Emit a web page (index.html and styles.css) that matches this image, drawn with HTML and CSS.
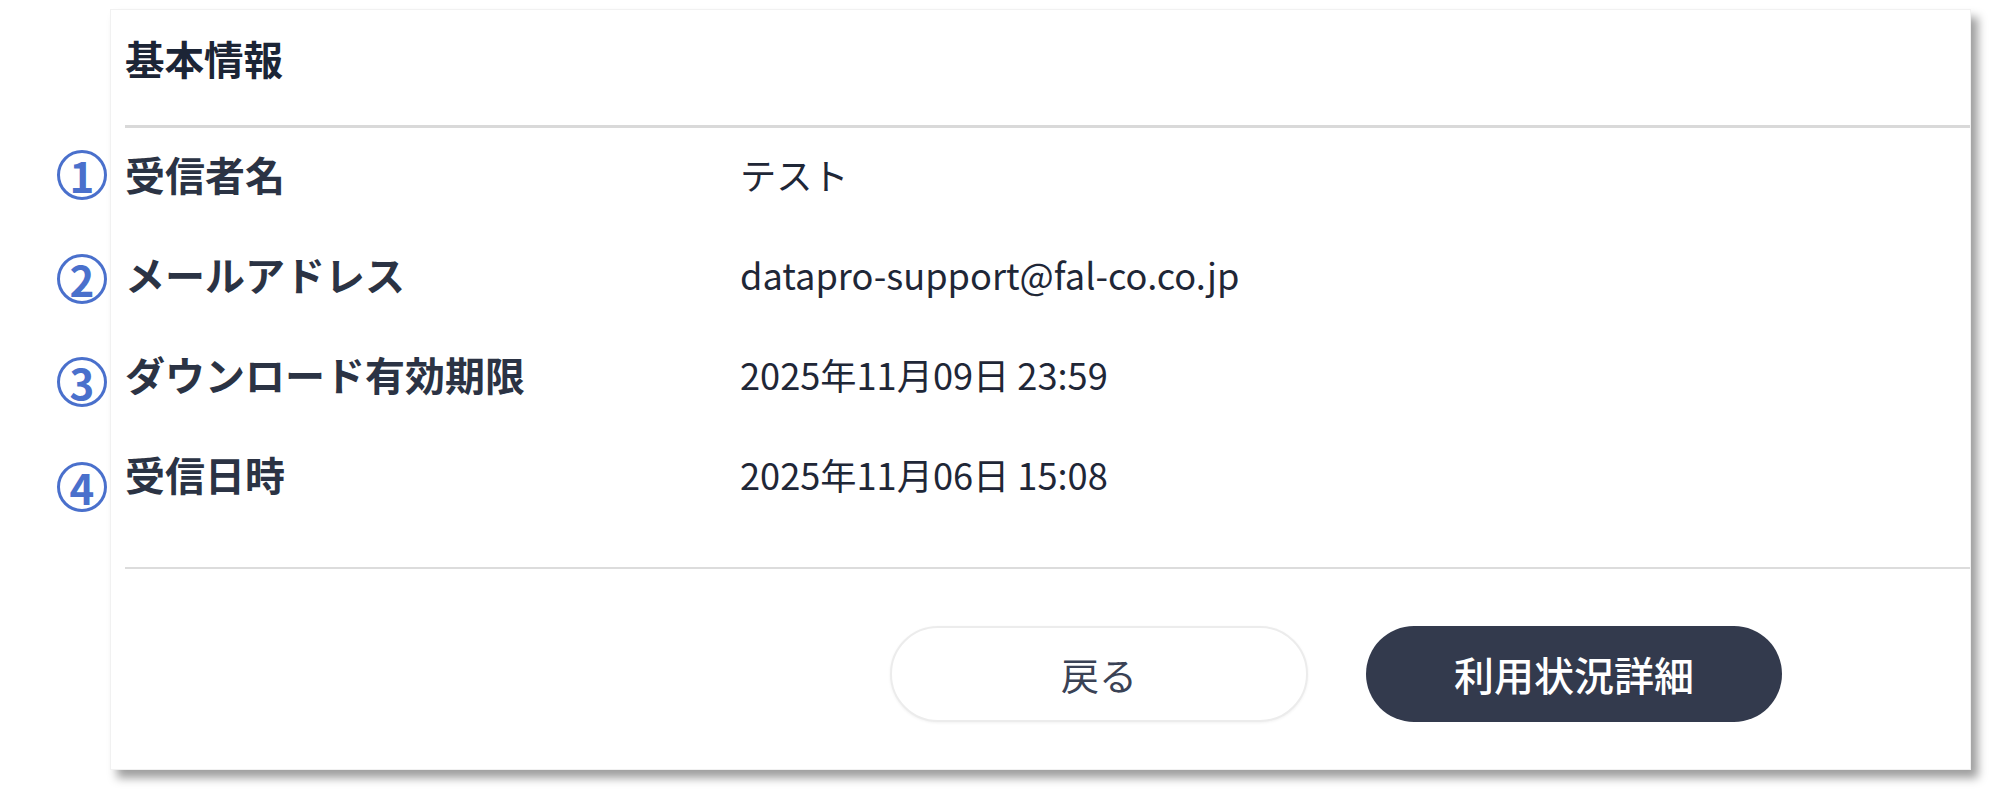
FILE: index.html
```html
<!DOCTYPE html>
<html lang="ja">
<head>
<meta charset="utf-8">
<title>基本情報</title>
<link rel="stylesheet" href="styles.css">
</head>
<body>
<div class="page">
  <section class="card">
    <header class="card-head">
      <h2 class="title">基本情報</h2>
    </header>
    <dl class="rows">
      <div class="row">
        <span class="mark m1">1</span>
        <dt class="label">受信者名</dt>
        <dd class="value">テスト</dd>
      </div>
      <div class="row">
        <span class="mark m2">2</span>
        <dt class="label">メールアドレス</dt>
        <dd class="value">datapro-support@fal-co.co.jp</dd>
      </div>
      <div class="row">
        <span class="mark m3">3</span>
        <dt class="label">ダウンロード有効期限</dt>
        <dd class="value">2025年11月09日 23:59</dd>
      </div>
      <div class="row">
        <span class="mark m4">4</span>
        <dt class="label">受信日時</dt>
        <dd class="value">2025年11月06日 15:08</dd>
      </div>
    </dl>
    <footer class="actions">
      <button class="btn btn-back" type="button">戻る</button>
      <button class="btn btn-primary" type="button">利用状況詳細</button>
    </footer>
  </section>
</div>
</body>
</html>
```
FILE: styles.css
```css
* { box-sizing: border-box; }
html, body {
  margin: 0;
  padding: 0;
  background: #ffffff;
}
body {
  font-family: "Noto Sans CJK JP", "Noto Sans", sans-serif;
  color: #1f2737;
}
.page {
  padding: 9px 0 0 110px;
  width: 2002px;
  height: 802px;
}
.card {
  width: 1861px;
  height: 761px;
  background: #ffffff;
  border: 1px solid #f1f1f1;
  box-shadow: 7px 8px 9px rgba(0, 0, 0, 0.38);
  padding-left: 14px;
  display: flex;
  flex-direction: column;
}
.card-head {
  padding-top: 24px;
  height: 118px;
  border-bottom: 3px solid #d9d9d9;
}
.title {
  margin: 0;
  font-size: 39.5px;
  line-height: 48px;
  font-weight: 700;
  color: #1c2536;
}
.rows {
  margin: 0;
  padding: 0;
  height: 441px;
  border-bottom: 2px solid #dcdcdc;
}
.row {
  position: relative;
  height: 100px;
  padding-bottom: 8px;
  display: flex;
  align-items: center;
}
.label {
  width: 615px;
  flex: none;
  font-size: 40px;
  line-height: 48px;
  font-weight: 700;
  color: #2b3344;
}
.value {
  margin: 0;
  font-size: 36.2px;
  line-height: 48px;
  font-weight: 400;
  color: #1f2737;
}
.mark {
  position: absolute;
  left: -68px;
  width: 50px;
  height: 50px;
  border: 3px solid #4a70cc;
  border-radius: 50%;
  display: flex;
  align-items: center;
  justify-content: center;
  font-family: "Noto Sans CJK JP", sans-serif;
  font-weight: 700;
  font-size: 42px;
  line-height: 1;
  color: #4a70cc;
}
.m1 { top: 22px; }
.m2 { top: 26px; }
.m3 { top: 29px; }
.m4 { top: 34px; }
.actions {
  display: flex;
  justify-content: flex-end;
  gap: 58px;
  padding-top: 57px;
  padding-right: 188px;
}
.btn {
  width: 418px;
  height: 96px;
  border-radius: 48px;
  font-family: "Noto Sans CJK JP", sans-serif;
  font-size: 38px;
  line-height: 1;
  cursor: pointer;
}
.btn-back {
  background: #ffffff;
  border: 2px solid #ececec;
  box-shadow: 0 1px 3px rgba(0, 0, 0, 0.06);
  color: #3a4255;
  font-weight: 400;
}
.btn-primary {
  background: #333a4d;
  border: none;
  color: #ffffff;
  font-weight: 500;
  font-size: 40px;
  width: 416px;
}
```
